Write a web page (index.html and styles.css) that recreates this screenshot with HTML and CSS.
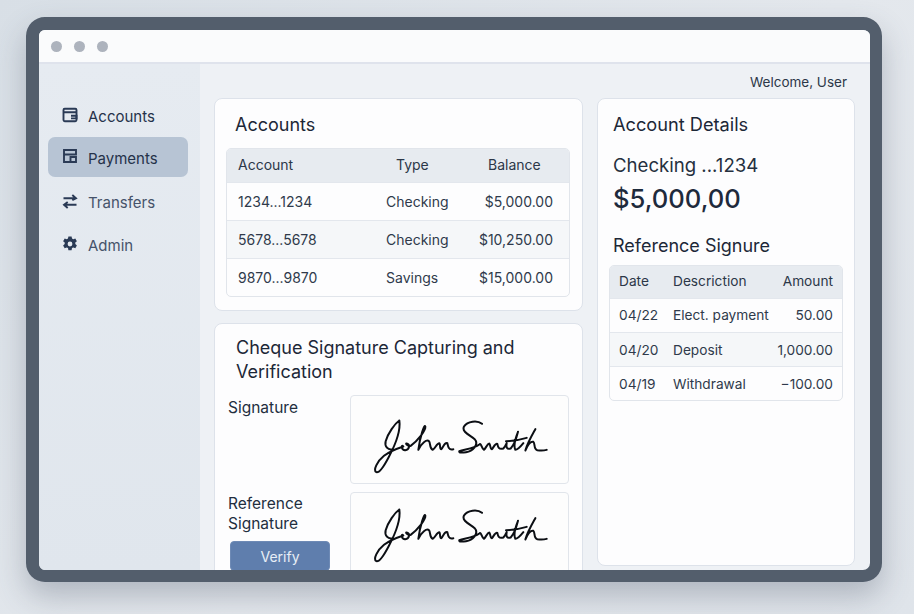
FILE: index.html
```html
<!DOCTYPE html>
<html>
<head>
<meta charset="utf-8">
<title>Accounts</title>
<link rel="stylesheet" href="styles.css">
</head>
<body>
<svg class="defs" width="0" height="0">
  <symbol id="sig" viewBox="30 55 540 170">
    <path d="M118 62C104 72 84 100 77 124C73 140 84 152 98 148M118 62C122 90 106 135 86 172C74 195 58 220 49 217C38 212 52 184 72 168C90 154 112 146 130 140C122 132 124 152 136 151C148 150 152 134 140 131C134 130 146 142 152 138C172 124 198 92 196 80C194 70 180 110 175 150C184 130 200 118 207 124C212 130 208 146 218 150C226 146 230 130 238 130C242 134 238 148 244 148C250 140 256 126 262 130C264 140 266 152 280 148" />
    <path d="M366 72C352 60 322 64 312 80C304 96 330 106 344 118C358 134 338 154 318 157C306 159 296 159 298 154C310 148 340 148 358 134C364 128 364 146 372 150C378 144 382 132 388 131C392 136 390 148 396 148C402 140 406 130 412 132C414 142 416 150 430 146C436 140 438 134 440 130C438 142 440 150 452 146C462 136 470 112 474 96C466 116 460 138 466 150C474 150 482 140 490 130M438 124C458 124 480 120 500 114M526 88C516 106 502 130 496 152C502 138 512 124 520 126C526 130 520 148 532 151C542 153 550 153 560 150" />
  </symbol>
</svg>
<div class="device">
  <div class="titlebar">
    <span class="dot"></span><span class="dot"></span><span class="dot"></span>
  </div>
  <div class="app">
    <nav class="sidebar">
      <a class="nav-item">
        <svg class="nav-icon" viewBox="0 0 18 18"><rect x="2.500" y="2.800" width="13" height="12.400" rx="1.200"/><path d="M2.500 6.200h13M10 9.800h5.500v2.600H10"/></svg>
        Accounts
      </a>
      <a class="nav-item active">
        <svg class="nav-icon" viewBox="0 0 18 18"><path d="M3 3h12v4.500H3zM3 7.500V15h12v-5H9.500v5"/></svg>
        Payments
      </a>
      <a class="nav-item">
        <svg class="nav-icon" viewBox="0 0 18 18"><path d="M2.500 6.200H15M11.300 3l3.700 3.200-3.700 2M15.500 12.800H3M6.700 10L3 12.800l3.700 3.200"/></svg>
        Transfers
      </a>
      <a class="nav-item">
        <svg class="nav-icon gear" viewBox="0 0 18 18"><path fill-rule="evenodd" d="M7.400 1.500h3.200l.4 2.100 1.300.7 2-.8 1.600 2.800-1.600 1.300v1.500l1.600 1.300-1.600 2.800-2-.8-1.300.7-.4 2.100H7.400l-.4-2.100-1.300-.7-2 .8-1.600-2.800 1.600-1.300V7.600L2.100 6.300l1.600-2.800 2 .8 1.300-.7zM9 6.600a2.400 2.400 0 1 0 0 4.800 2.400 2.400 0 0 0 0-4.800z"/></svg>
        Admin
      </a>
    </nav>
    <main class="main">
      <div class="welcome">Welcome, User</div>
      <div class="columns">
        <div class="left-col">
          <section class="card accounts-card">
            <h2 class="card-title">Accounts</h2>
            <div class="table-wrap">
              <table class="accounts-table">
                <tr><th>Account</th><th class="type">Type</th><th class="balance">Balance</th></tr>
                <tr><td>1234...1234</td><td class="type">Checking</td><td class="right">$5,000.00</td></tr>
                <tr class="alt"><td>5678...5678</td><td class="type">Checking</td><td class="right">$10,250.00</td></tr>
                <tr><td>9870...9870</td><td class="type">Savings</td><td class="right">$15,000.00</td></tr>
              </table>
            </div>
          </section>
          <section class="card cheque-card">
            <h2 class="card-title">Cheque Signature Capturing and Verification</h2>
            <div class="sig-row">
              <div class="sig-label">Signature</div>
              <div class="sig-box"><svg class="sig"><use href="#sig"/></svg></div>
            </div>
            <div class="sig-row second">
              <div class="sig-side">
                <div class="sig-label">Reference Signature</div>
                <button class="verify">Verify</button>
              </div>
              <div class="sig-box"><svg class="sig"><use href="#sig"/></svg></div>
            </div>
          </section>
        </div>
        <section class="card details-card">
          <h2 class="card-title">Account Details</h2>
          <div class="acct-name">Checking ...1234</div>
          <div class="acct-balance">$5,000,00</div>
          <h3 class="ref-title">Reference Signure</h3>
          <div class="table-wrap">
            <table class="tx-table">
              <tr><th>Date</th><th>Descriction</th><th class="right">Amount</th></tr>
              <tr><td>04/22</td><td>Elect. payment</td><td class="right">50.00</td></tr>
              <tr class="alt"><td>04/20</td><td>Deposit</td><td class="right">1,000.00</td></tr>
              <tr class="last"><td>04/19</td><td>Withdrawal</td><td class="right">−100.00</td></tr>
            </table>
          </div>
        </section>
      </div>
    </main>
  </div>
</div>
</body>
</html>
```

FILE: styles.css
```css
html, body { margin: 0; height: 100%; }
body {
  background: linear-gradient(135deg, #d8dfe6 0%, #e4e8ed 55%, #dfe4ea 100%);
  font-family: Inter, "Liberation Sans", sans-serif;
  color: #1f2a3a;
  overflow: hidden;
}
.defs { position: absolute; }

.device {
  box-sizing: border-box;
  width: 856px;
  height: 565px;
  margin: 17px 0 0 26px;
  border: 13px solid #535e6c;
  border-width: 13px 12px 12px 13px;
  border-radius: 19px;
  background: #eef1f5;
  overflow: hidden;
  display: flex;
  flex-direction: column;
  box-shadow: 0 14px 30px rgba(70, 80, 100, .32);
}
.titlebar {
  flex: none;
  box-sizing: border-box;
  height: 34px;
  background: #fafbfc;
  border-bottom: 2px solid #dfe3ec;
  display: flex;
  align-items: center;
  gap: 12px;
  padding: 1px 0 0 12px;
}
.dot { width: 11px; height: 11px; border-radius: 50%; background: #adb3bd; }

.app { flex: 1; display: flex; min-height: 0; }
.sidebar {
  flex: none;
  box-sizing: border-box;
  width: 161px;
  background: linear-gradient(#e6ebf1, #e0e6ed);
  padding: 32px 12px 0 9px;
  display: flex;
  flex-direction: column;
  gap: 3px;
}
.nav-item {
  height: 40px;
  border-radius: 7px;
  display: flex;
  align-items: center;
  gap: 9px;
  padding-left: 13px;
  font-size: 15px;
  color: #25324a;
}
.nav-item:first-child { margin-bottom: -2px; }
.nav-item:nth-child(3), .nav-item:nth-child(4) { color: #46536a; }
.nav-item.active { background: #b7c4d4; margin-bottom: 2px; padding-top: 2px; height: 38px; }
.nav-icon { width: 18px; height: 18px; margin-bottom: 2px; fill: none; stroke: #2a3a55; stroke-width: 1.900; }
.nav-item.active .nav-icon { margin-bottom: 4px; }
.nav-icon.gear { fill: #2a3a55; stroke: none; }

.main { flex: 1; min-width: 0; display: flex; flex-direction: column; padding: 0 15px 4px 14px; }
.welcome { flex: none; height: 34px; line-height: 36px; text-align: right; font-size: 13.500px; padding-right: 8px; color: #2c3748; }
.columns { flex: 1; min-height: 0; display: flex; gap: 14px; align-items: stretch; }
.left-col { flex: none; width: 369px; display: flex; flex-direction: column; gap: 12px; height: 472px; }

.card {
  box-sizing: border-box;
  background: #fdfdfe;
  border: 1px solid #dde2ea;
  border-radius: 8px;
}
.card-title { margin: 0; font-size: 18px; font-weight: 400; color: #1c2737; }
.accounts-card { flex: none; height: 213px; padding: 15px 12px 0 11px; }
.accounts-card .card-title { line-height: 22px; padding: 0 0 0 9px; margin-bottom: 12px; }
.cheque-card { flex: none; height: 300px; padding: 12px 13px 0 13px; }
.cheque-card .card-title { line-height: 24px; padding-left: 8px; margin-bottom: 11px; }
.details-card { flex: none; width: 258px; padding: 14px 11px 0 11px; }
.details-card .card-title { line-height: 22px; padding-left: 4px; font-size: 18.200px; }

.table-wrap { border: 1px solid #e1e5eb; border-radius: 5px; overflow: hidden; }
table { border-collapse: collapse; width: 100%; table-layout: fixed; }
th { box-sizing: border-box; background: #e7ebf0; font-weight: 400; text-align: left; color: #2c3748; }
td { box-sizing: border-box; color: #2f3a4b; border-top: 1px solid #e3e7ed; }
tr.alt td { background: #f5f7f9; }
.right { text-align: right; }

.accounts-table { font-size: 14px; }
.accounts-table th { height: 33px; padding: 0 0 2px 11px; }
.accounts-table td { height: 38px; padding: 0 0 0 11px; }
.accounts-table th:nth-child(1) { width: 133px; }
.accounts-table th:nth-child(2) { width: 108px; }
.accounts-table th.type { padding-left: 36px; }
.accounts-table td.type { padding-left: 26px; }
.accounts-table th.balance { padding-left: 20px; }
.accounts-table td.right { padding: 0 16px 0 0; }

.acct-name { margin: 17px 0 0 4px; font-size: 18.600px; line-height: 26px; color: #25303f; }
.acct-balance { margin: 4px 0 0 4px; font-size: 25.600px; font-weight: 500; line-height: 34px; color: #1e2a3c; }
.ref-title { margin: 18px 0 7px 4px; font-size: 18px; font-weight: 400; line-height: 24px; color: #1c2737; }
.tx-table { font-size: 13.700px; }
.tx-table th { height: 32px; padding: 0 0 2px 9px; }
.tx-table td { height: 34px; padding: 0 0 0 9px; }
.tx-table th:nth-child(1) { width: 54px; }
.tx-table th:nth-child(2) { width: 110px; }
.tx-table th.right { padding: 0 9px 2px 0; }
.tx-table td.right { padding: 0 9px 0 0; }
.tx-table tr.alt td, .tx-table tr.last td { padding-top: 2px; }

.sig-row { display: flex; }
.sig-row.second { margin-top: 8px; }
.sig-label { font-size: 15.500px; line-height: 20px; color: #232e3e; margin-top: 3px; }
.sig-row.second .sig-label { margin-top: 2px; width: 90px; }
.sig-row > .sig-label, .sig-side { flex: none; width: 122px; }
.sig-box {
  box-sizing: border-box;
  width: 219px;
  height: 89px;
  background: #fdfdfd;
  border: 1px solid #e1e5eb;
  border-radius: 4px;
  padding: 22px 0 0 19px;
  flex: none;
}
.sig-row.second .sig-box { padding-top: 14px; }
.sig { display: block; width: 180px; height: 57px; fill: none; stroke: #0c0f14; stroke-width: 6; stroke-linecap: round; stroke-linejoin: round; }
.verify {
  display: block;
  width: 100px;
  height: 30px;
  margin: 7px 0 0 2px;
  background: #5f7ead;
  border: 1px solid #6e8ab5;
  border-radius: 4px;
  color: #e8eef6;
  font: 14px Inter, "Liberation Sans", sans-serif;
}
```
